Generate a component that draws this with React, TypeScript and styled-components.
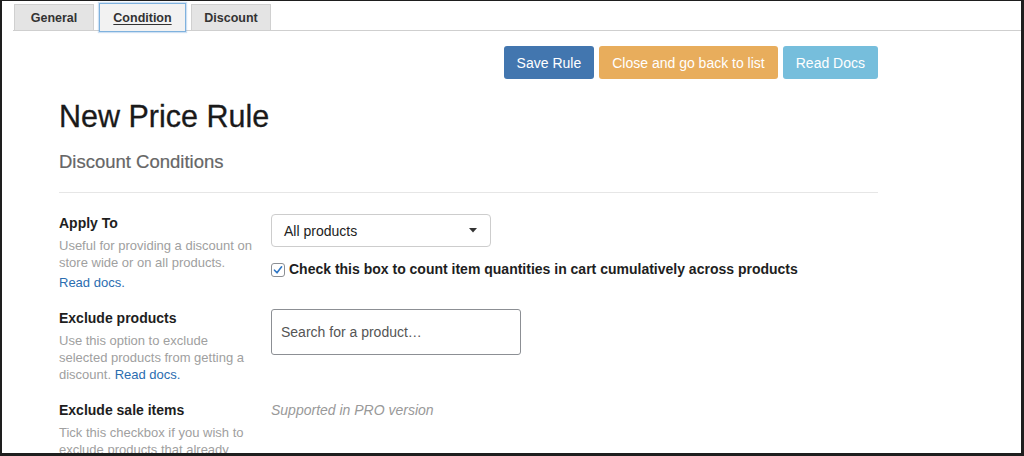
import React from "react";
import styled, { createGlobalStyle } from "styled-components";

const Global = createGlobalStyle`
  html, body { margin: 0; padding: 0; background: #fff; }
  body { font-family: "Liberation Sans", Arial, Helvetica, sans-serif; color: #222; }
  * { box-sizing: border-box; }
`;

const Frame = styled.div`
  width: 1024px;
  height: 456px;
  overflow: hidden;
  border-style: solid;
  border-color: #1e1e1e;
  border-width: 1px 3px 3px 2px;
  background: #fff;
`;

const TabBar = styled.div`
  display: flex;
  align-items: flex-end;
  gap: 5px;
  margin-left: 11px;
  padding-left: 1px;
  padding-top: 3px;
  border-bottom: 1px solid #cfcfcf;
  height: 30px;
`;

const Tab = styled.div<{ $active?: boolean }>`
  display: flex;
  align-items: center;
  justify-content: center;
  width: ${(p) => (p.$active ? "87px" : "80px")};
  height: ${(p) => (p.$active ? "29px" : "26px")};
  margin-bottom: ${(p) => (p.$active ? "-2px" : "0")};
  background: ${(p) => (p.$active ? "#f2f2f2" : "#e4e4e4")};
  border: 1px solid ${(p) => (p.$active ? "#7fb2de" : "#d0d0d0")};
  border-bottom: ${(p) => (p.$active ? "1px solid #7fb2de" : "none")};
  box-shadow: ${(p) => (p.$active ? "0 0 1px 1px rgba(120,170,220,0.35)" : "none")};
  font-size: 12.5px;
  font-weight: bold;
  color: #333;
  text-decoration: ${(p) => (p.$active ? "underline" : "none")};
  text-underline-offset: 2px;
  position: relative;
  z-index: ${(p) => (p.$active ? 1 : 0)};
`;

const Content = styled.div`
  width: 819px;
  margin: 0 0 0 57px;
`;

const Actions = styled.div`
  display: flex;
  justify-content: flex-end;
  gap: 5px;
  margin-top: 15px;
`;

const Button = styled.button<{ $bg: string }>`
  height: 33px;
  padding: 0 13px;
  border: none;
  border-radius: 3px;
  background: ${(p) => p.$bg};
  color: #fff;
  font-family: inherit;
  font-size: 14px;
  cursor: pointer;
`;

const Title = styled.h1`
  margin: 19px 0 0;
  font-size: 30.5px;
  line-height: 36px;
  font-weight: normal;
  color: #1a1a1a;
  -webkit-text-stroke: 0.3px #1a1a1a;
`;

const Subtitle = styled.h2`
  margin: 17px 0 0;
  font-size: 18.5px;
  line-height: 22px;
  font-weight: normal;
  color: #666;
  -webkit-text-stroke: 0.2px #666;
`;

const Rule = styled.hr`
  margin: 19px 0 0;
  border: none;
  border-top: 1px solid #e6e6e6;
`;

const Rows = styled.div`
  display: flex;
  flex-direction: column;
  gap: 18px;
  margin-top: 21px;
`;

const Row = styled.div`
  display: grid;
  grid-template-columns: 212px 1fr;
`;

const Label = styled.div`
  font-size: 14px;
  line-height: 18px;
  font-weight: bold;
  color: #1e1e1e;
`;

const Desc = styled.div`
  margin-top: 5px;
  width: 196px;
  font-size: 13px;
  line-height: 17px;
  color: #a0a0a0;
`;

const DocLink = styled.a<{ $block?: boolean }>`
  display: ${(p) => (p.$block ? "block" : "inline")};
  margin-top: ${(p) => (p.$block ? "3px" : "0")};
  color: #2b6db0;
  font-size: 13px;
  line-height: 17px;
  text-decoration: none;
`;

const Field = styled.div`
  display: flex;
  flex-direction: column;
  align-items: flex-start;
`;

const Select = styled.div`
  display: flex;
  align-items: center;
  justify-content: space-between;
  width: 220px;
  height: 33px;
  padding: 0 13px 0 12px;
  border: 1px solid #cdcdcd;
  border-radius: 4px;
  font-size: 14px;
  color: #222;
`;

const CheckRow = styled.label`
  display: flex;
  align-items: center;
  gap: 4px;
  margin-top: 14px;
  font-size: 14px;
  font-weight: bold;
  color: #1e1e1e;
`;

const Box = styled.span`
  display: inline-flex;
  align-items: center;
  justify-content: center;
  width: 14px;
  height: 14px;
  border: 1px solid #8c8f94;
  border-radius: 3px;
  background: #fff;
  margin-top: 2px;
`;

const Search = styled.div`
  display: flex;
  align-items: center;
  width: 250px;
  height: 46px;
  padding: 0 9px;
  border: 1px solid #8c8f94;
  border-radius: 3px;
  font-size: 14px;
  color: #555;
`;

const Pro = styled.div`
  font-size: 14px;
  line-height: 18px;
  font-style: italic;
  color: #999;
`;

export default function App() {
  return (
    <>
      <Global />
      <Frame>
        <TabBar>
          <Tab>General</Tab>
          <Tab $active>Condition</Tab>
          <Tab>Discount</Tab>
        </TabBar>
        <Content>
          <Actions>
            <Button $bg="#4276af">Save Rule</Button>
            <Button $bg="#e8ad5c">Close and go back to list</Button>
            <Button $bg="#76bedc">Read Docs</Button>
          </Actions>
          <Title>New Price Rule</Title>
          <Subtitle>Discount Conditions</Subtitle>
          <Rule />
          <Rows>
            <Row>
              <div>
                <Label>Apply To</Label>
                <Desc>Useful for providing a discount on store wide or on all products.</Desc>
                <DocLink $block href="#">Read docs.</DocLink>
              </div>
              <Field>
                <Select>
                  <span>All products</span>
                  <svg width="8" height="5" viewBox="0 0 8 5">
                    <path d="M0 0 H8 L4 4.5 Z" fill="#333" />
                  </svg>
                </Select>
                <CheckRow>
                  <Box>
                    <svg width="10" height="10" viewBox="0 0 10 10">
                      <path d="M1.5 5.2 L4 7.8 L8.6 1.8" fill="none" stroke="#2f76c4" strokeWidth="1.6" strokeLinecap="round" strokeLinejoin="round" />
                    </svg>
                  </Box>
                  Check this box to count item quantities in cart cumulatively across products
                </CheckRow>
              </Field>
            </Row>
            <Row>
              <div>
                <Label>Exclude products</Label>
                <Desc>
                  Use this option to exclude selected products from getting a discount.{" "}
                  <DocLink href="#">Read docs.</DocLink>
                </Desc>
              </div>
              <Field>
                <Search>Search for a product…</Search>
              </Field>
            </Row>
            <Row>
              <div>
                <Label>Exclude sale items</Label>
                <Desc>Tick this checkbox if you wish to exclude products that already have a discount.</Desc>
              </div>
              <Field>
                <Pro>Supported in PRO version</Pro>
              </Field>
            </Row>
          </Rows>
        </Content>
      </Frame>
    </>
  );
}
